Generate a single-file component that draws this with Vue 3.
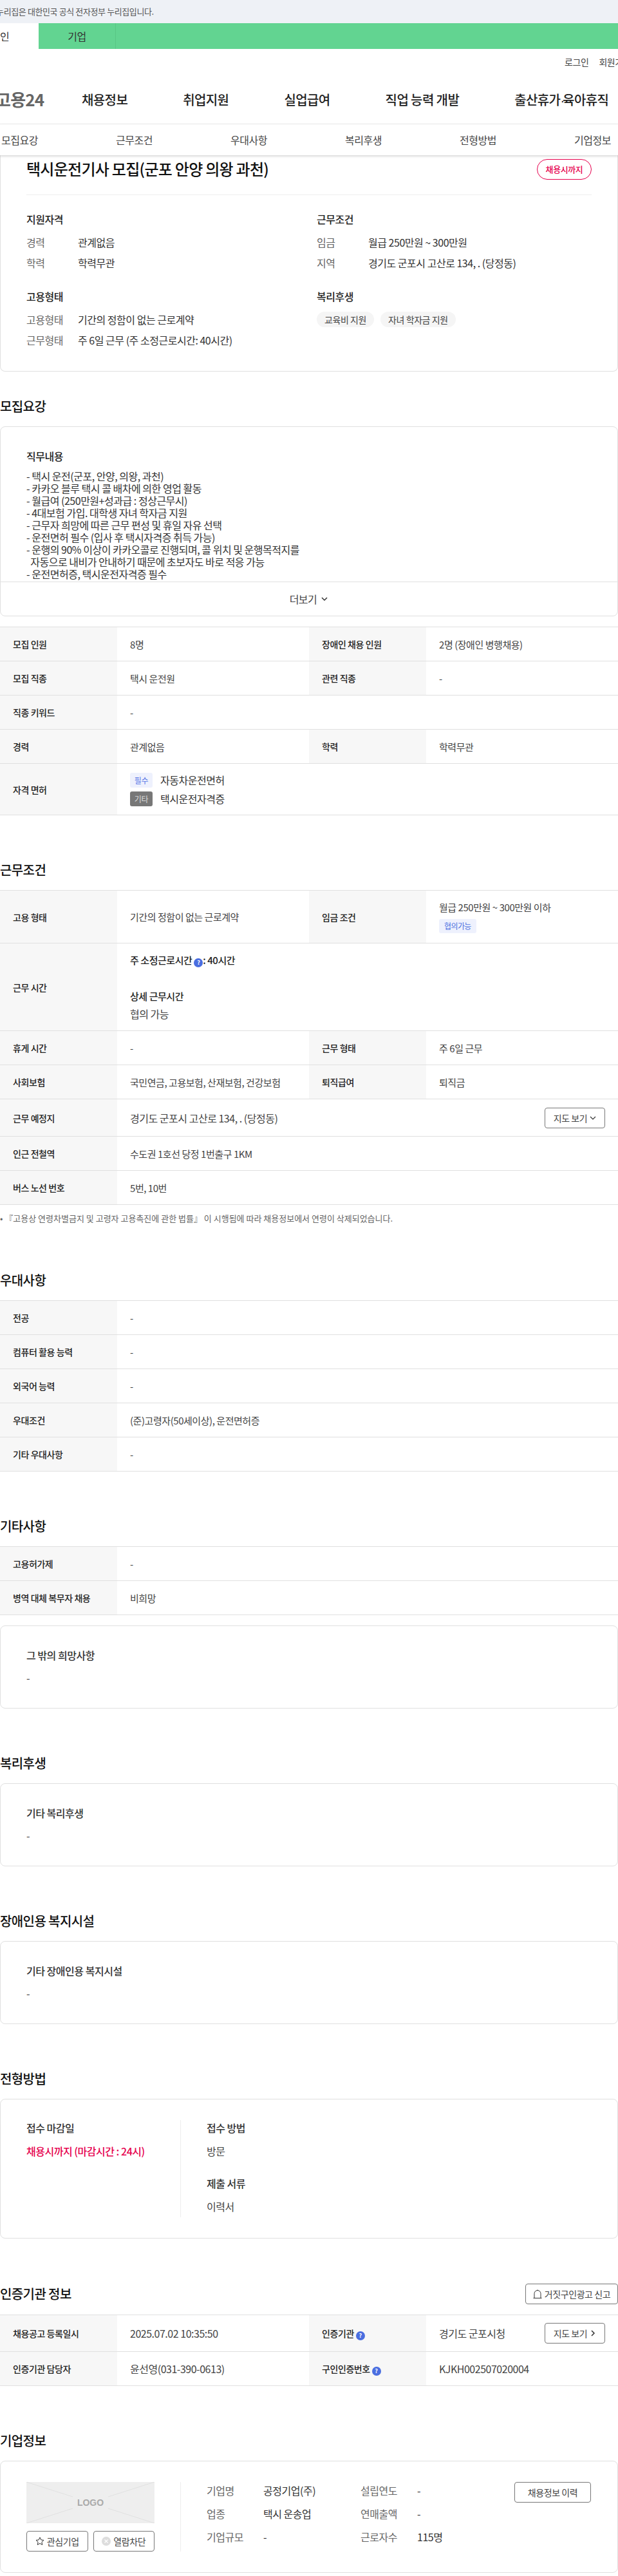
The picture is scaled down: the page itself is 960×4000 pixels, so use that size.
<script setup>
const mainNav = ['채용정보', '취업지원', '실업급여', '직업 능력 개발']
const tabs = ['모집요강', '근무조건', '우대사항', '복리후생', '전형방법', '기업정보']

const jobLines = [
  '- 택시 운전(군포, 안양, 의왕, 과천)',
  '- 카카오 블루 택시 콜 배차에 의한 영업 활동',
  '- 월급여 (250만원+성과급 : 정상근무시)',
  '- 4대보험 가입. 대학생 자녀 학자금 지원',
  '- 근무자 희망에 따른 근무 편성 및 휴일 자유 선택',
  '- 운전면허 필수 (입사 후 택시자격증 취득 가능)',
  '- 운행의 90% 이상이 카카오콜로 진행되며, 콜 위치 및 운행목적지를',
  '  자동으로 내비가 안내하기 때문에 초보자도 바로 적응 가능',
  '- 운전면허증, 택시운전자격증 필수'
]

const prefRows = [
  ['전공', '-'],
  ['컴퓨터 활용 능력', '-'],
  ['외국어 능력', '-'],
  ['우대조건', '(준)고령자(50세이상), 운전면허증'],
  ['기타 우대사항', '-']
]
</script>

<template>
  <div class="page">
    <div class="gov-bar"><span>이 누리집은 대한민국 공식 전자정부 누리집입니다.</span></div>
    <div class="user-tabs">
      <a class="user-tab on">개인</a>
      <a class="user-tab">기업</a>
    </div>
    <div class="util">
      <a>로그인</a>
      <a>회원가입</a>
    </div>
    <div class="gnb">
      <span class="logo">고용24</span>
      <a v-for="item in mainNav" :key="item">{{ item }}</a>
      <a>출산휴가<span class="dot">·</span>육아휴직</a>
    </div>
    <nav class="tabs">
      <a v-for="tab in tabs" :key="tab">{{ tab }}</a>
    </nav>

    <div class="card summary">
      <div class="summary-head">
        <h1>택시운전기사 모집(군포 안양 의왕 과천)</h1>
        <span class="deadline">채용시까지</span>
      </div>
      <div class="summary-grid">
        <div>
          <h3>지원자격</h3>
          <dl>
            <dt>경력</dt><dd>관계없음</dd>
            <dt>학력</dt><dd>학력무관</dd>
          </dl>
        </div>
        <div>
          <h3>근무조건</h3>
          <dl>
            <dt>임금</dt><dd>월급 250만원 ~ 300만원</dd>
            <dt>지역</dt><dd>경기도 군포시 고산로 134, . (당정동)</dd>
          </dl>
        </div>
        <div>
          <h3>고용형태</h3>
          <dl>
            <dt>고용형태</dt><dd>기간의 정함이 없는 근로계약</dd>
            <dt>근무형태</dt><dd>주 6일 근무 (주 소정근로시간: 40시간)</dd>
          </dl>
        </div>
        <div>
          <h3>복리후생</h3>
          <div class="chips">
            <span>교육비 지원</span>
            <span>자녀 학자금 지원</span>
          </div>
        </div>
      </div>
    </div>

    <section class="first">
      <h2>모집요강</h2>
      <div class="card job">
        <div class="job-body">
          <h4>직무내용</h4>
          <pre>{{ jobLines.join('\n') }}</pre>
        </div>
        <div class="more">
          더보기
          <svg width="12" height="12" viewBox="0 0 12 12"><path d="M2 4l4 4 4-4" fill="none" stroke="#333" stroke-width="1.5"/></svg>
        </div>
      </div>
      <table class="info mt16">
        <colgroup><col class="c-th"><col class="c-td"><col class="c-th"><col class="c-td"></colgroup>
        <tbody>
          <tr><th>모집 인원</th><td>8명</td><th>장애인 채용 인원</th><td>2명 (장애인 병행채용)</td></tr>
          <tr><th>모집 직종</th><td>택시 운전원</td><th>관련 직종</th><td>-</td></tr>
          <tr><th>직종 키워드</th><td colspan="3">-</td></tr>
          <tr><th>경력</th><td>관계없음</td><th>학력</th><td>학력무관</td></tr>
          <tr class="license">
            <th>자격 면허</th>
            <td colspan="3">
              <div class="lic"><span class="lic-tag must">필수</span>자동차운전면허</div>
              <div class="lic"><span class="lic-tag etc">기타</span>택시운전자격증</div>
            </td>
          </tr>
        </tbody>
      </table>
    </section>

    <section>
      <h2>근무조건</h2>
      <table class="info">
        <colgroup><col class="c-th"><col class="c-td"><col class="c-th"><col class="c-td"></colgroup>
        <tbody>
          <tr class="h82">
            <th>고용 형태</th>
            <td>기간의 정함이 없는 근로계약</td>
            <th>임금 조건</th>
            <td>
              <div class="lh22">월급 250만원 ~ 300만원 이하</div>
              <span class="nego">협의가능</span>
            </td>
          </tr>
          <tr class="h136">
            <th>근무 시간</th>
            <td colspan="3">
              <div class="strong lh22">주 소정근로시간 <i class="help">?</i>: 40시간</div>
              <div class="strong lh22 hours">상세 근무시간</div>
              <div class="hours-val">협의 가능</div>
            </td>
          </tr>
          <tr><th>휴게 시간</th><td>-</td><th>근무 형태</th><td>주 6일 근무</td></tr>
          <tr><th>사회보험</th><td>국민연금, 고용보험, 산재보험, 건강보험</td><th>퇴직급여</th><td>퇴직금</td></tr>
          <tr class="h58">
            <th>근무 예정지</th>
            <td colspan="3">
              <div class="with-btn">
                <span class="big">경기도 군포시 고산로 134, . (당정동)</span>
                <button class="btn map">지도 보기
                  <svg width="10" height="10" viewBox="0 0 10 10"><path d="M1 3l4 4 4-4" fill="none" stroke="#333" stroke-width="1.2"/></svg>
                </button>
              </div>
            </td>
          </tr>
          <tr><th>인근 전철역</th><td colspan="3">수도권 1호선 당정 1번출구 1KM</td></tr>
          <tr><th>버스 노선 번호</th><td colspan="3">5번, 10번</td></tr>
        </tbody>
      </table>
      <p class="note">• 『고용상 연령차별금지 및 고령자 고용촉진에 관한 법률』 이 시행됨에 따라 채용정보에서 연령이 삭제되었습니다.</p>
    </section>

    <section>
      <h2>우대사항</h2>
      <table class="info">
        <colgroup><col class="c-th"><col class="c-td"><col class="c-th"><col class="c-td"></colgroup>
        <tbody>
          <tr v-for="row in prefRows" :key="row[0]"><th>{{ row[0] }}</th><td colspan="3">{{ row[1] }}</td></tr>
        </tbody>
      </table>
    </section>

    <section>
      <h2>기타사항</h2>
      <table class="info">
        <colgroup><col class="c-th"><col class="c-td"><col class="c-th"><col class="c-td"></colgroup>
        <tbody>
          <tr><th>고용허가제</th><td colspan="3">-</td></tr>
          <tr><th>병역 대체 복무자 채용</th><td colspan="3">비희망</td></tr>
        </tbody>
      </table>
      <div class="card plain mt16">
        <h5>그 밖의 희망사항</h5>
        <p>-</p>
      </div>
    </section>

    <section>
      <h2>복리후생</h2>
      <div class="card plain">
        <h5>기타 복리후생</h5>
        <p>-</p>
      </div>
    </section>

    <section>
      <h2>장애인용 복지시설</h2>
      <div class="card plain">
        <h5>기타 장애인용 복지시설</h5>
        <p>-</p>
      </div>
    </section>

    <section>
      <h2>전형방법</h2>
      <div class="card apply">
        <div class="apply-left">
          <h5>접수 마감일</h5>
          <p class="red">채용시까지 (마감시간 : 24시)</p>
        </div>
        <div class="apply-right">
          <h5>접수 방법</h5>
          <p>방문</p>
          <h5 class="docs">제출 서류</h5>
          <p>이력서</p>
        </div>
      </div>
    </section>

    <section>
      <div class="head-row">
        <h2>인증기관 정보</h2>
        <button class="btn report">
          <svg width="14" height="14" viewBox="0 0 14 14"><path d="M.5 13.500h13M2 13.500V6.500a5 5 0 0 1 10 0v7M7 1.500V.5" fill="none" stroke="#333" stroke-width="1"/></svg>
          거짓구인광고 신고
        </button>
      </div>
      <table class="info">
        <colgroup><col class="c-th"><col class="c-td"><col class="c-th"><col class="c-td"></colgroup>
        <tbody>
          <tr class="h57">
            <th>채용공고 등록일시</th>
            <td class="big">2025.07.02 10:35:50</td>
            <th>인증기관 <i class="help">?</i></th>
            <td>
              <div class="with-btn">
                <span class="big">경기도 군포시청</span>
                <button class="btn map">지도 보기
                  <svg width="10" height="12" viewBox="0 0 10 12"><path d="M3 2l4 4-4 4" fill="none" stroke="#333" stroke-width="1.5"/></svg>
                </button>
              </div>
            </td>
          </tr>
          <tr>
            <th>인증기관 담당자</th>
            <td class="big">윤선영(031-390-0613)</td>
            <th>구인인증번호 <i class="help">?</i></th>
            <td class="big">KJKH002507020004</td>
          </tr>
        </tbody>
      </table>
    </section>

    <section>
      <h2>기업정보</h2>
      <div class="card company">
        <div class="company-left">
          <div class="logo-box">
            <svg width="199" height="64" viewBox="0 0 199 64">
              <path d="M0 0l72 23M127 23L199 0M0 64l72-23M127 41l72 23" stroke="#e0e0e0" fill="none"/>
            </svg>
            <span>LOGO</span>
          </div>
          <div class="company-btns">
            <button class="btn">
              <svg width="14" height="14" viewBox="0 0 14 14"><path d="M7 1l1.800 3.900 4.200.5-3.100 2.900.8 4.200L7 10.400 3.300 12.500l.8-4.200L1 5.400l4.200-.5z" fill="none" stroke="#333" stroke-width="1"/></svg>
              관심기업
            </button>
            <button class="btn">
              <svg width="14" height="14" viewBox="0 0 14 14"><circle cx="7" cy="7" r="7" fill="#ddd"/><path d="M4.500 4.500l5 5M9.500 4.500l-5 5" stroke="#fff" stroke-width="1.2"/></svg>
              열람차단
            </button>
          </div>
        </div>
        <div class="company-info">
          <span class="k">기업명</span><span class="v">공정기업(주)</span><span class="k">설립연도</span><span class="v">-</span>
          <span class="k">업종</span><span class="v">택시 운송업</span><span class="k">연매출액</span><span class="v">-</span>
          <span class="k">기업규모</span><span class="v">-</span><span class="k">근로자수</span><span class="v">115명</span>
        </div>
        <button class="btn history">채용정보 이력</button>
      </div>
    </section>
  </div>
</template>

<style>
body {
  margin: 0;
  background: #fff;
}
</style>

<style scoped>
.page {
  width: 960px;
  height: 4000px;
  overflow: hidden;
  font-family: "Noto Sans CJK KR", "Noto Sans", sans-serif;
  font-size: 15px;
  color: #333;
}
/* letter-spacing in em has to be set per element, it inherits as a fixed length */
.page,
.page * {
  letter-spacing: -0.03em;
}

/* header */
.gov-bar {
  height: 36px;
  line-height: 36px;
  background: #eef1f6;
  font-size: 13px;
  color: #555;
  white-space: nowrap;
}
.gov-bar span {
  margin-left: -20px;
}
.user-tabs {
  display: flex;
  height: 40px;
  padding-left: 60px;
  background: #62d491;
  position: relative;
}
.user-tab {
  width: 119px;
  line-height: 40px;
  text-align: center;
  font-size: 16px;
  color: #333;
  border-right: 1px solid #58c685;
}
.user-tab.on {
  position: absolute;
  left: -60px;
  width: 120px;
  background: #fff;
  border: 0;
}
.util {
  display: flex;
  gap: 16px;
  height: 40px;
  align-items: center;
  font-size: 14px;
  color: #444;
  padding-left: 877px;
  white-space: nowrap;
}
.gnb {
  display: flex;
  gap: 86px;
  align-items: center;
  height: 76px;
  border-bottom: 1px solid #e8e8e8;
  font-size: 20px;
  font-weight: 500;
  color: #222;
  white-space: nowrap;
  padding-left: 127px;
  position: relative;
}
.dot {
  font-family: "Liberation Sans", sans-serif;
  letter-spacing: -0.15em;
}
.logo {
  position: absolute;
  left: -7px;
  top: 19px;
  line-height: 38px;
  font-size: 26px;
  font-weight: 700;
  color: #666;
}
.tabs {
  display: flex;
  justify-content: space-between;
  height: 48px;
  align-items: center;
  padding: 0 11px 0 2px;
  font-size: 16px;
  color: #444;
  box-shadow: 0 2px 3px rgba(0, 0, 0, .15);
  position: relative;
}

/* cards */
.card {
  border: 1px solid #e0e0e0;
  border-radius: 8px;
  box-sizing: border-box;
  background: #fff;
}
.summary {
  height: 336px;
  padding: 0 40px;
  border-top: 0;
  border-radius: 0 0 8px 8px;
}
.summary-head {
  display: flex;
  justify-content: space-between;
  height: 62px;
  border-bottom: 1px solid #eee;
  box-sizing: border-box;
}
h1 {
  margin: 0;
  font-size: 24px;
  font-weight: 500;
  line-height: 42px;
  letter-spacing: -0.05em;
  color: #111;
}
.deadline {
  margin-top: 6px;
  height: 32px;
  line-height: 30px;
  width: 85px;
  text-align: center;
  box-sizing: border-box;
  border: 1px solid #e6004d;
  border-radius: 16px;
  color: #e6004d;
  font-size: 13px;
  font-weight: 500;
}
.summary-grid {
  display: grid;
  grid-template-columns: 451px 1fr;
  row-gap: 28px;
  padding-top: 25px;
}
h3 {
  margin: 0 0 12px;
  font-size: 16px;
  line-height: 24px;
  font-weight: 500;
  color: #222;
}
dl {
  display: grid;
  grid-template-columns: 80px 1fr;
  row-gap: 8px;
  margin: 0;
  font-size: 16px;
  line-height: 24px;
}
dt {
  color: #666;
}
dd {
  margin: 0;
  color: #333;
  white-space: nowrap;
}
.chips {
  display: flex;
  gap: 10px;
}
.chips span {
  height: 24px;
  line-height: 24px;
  padding: 0 12px;
  border-radius: 12px;
  background: #f5f5f5;
  font-size: 14px;
  color: #444;
}

/* sections */
section {
  margin-top: 70px;
}
section.first {
  margin-top: 39px;
}
h2 {
  margin: 0 0 16px;
  height: 30px;
  line-height: 30px;
  font-size: 20px;
  font-weight: 500;
  color: #111;
}
.mt16 {
  margin-top: 16px;
}
.job {
  height: 295px;
  overflow: hidden;
}
.job-body {
  height: 241px;
  box-sizing: border-box;
  padding: 33px 40px 0;
  overflow: hidden;
  border-bottom: 1px solid #e0e0e0;
}
h4 {
  margin: 0 0 10px;
  font-size: 16px;
  line-height: 24px;
  font-weight: 500;
  color: #222;
}
pre {
  margin: 0;
  font-family: inherit;
  font-size: 16px;
  line-height: 19px;
  color: #333;
}
.more {
  display: flex;
  justify-content: center;
  align-items: center;
  gap: 6px;
  height: 52px;
  font-size: 16px;
  color: #444;
}

/* tables */
.info {
  width: 960px;
  table-layout: fixed;
  border-collapse: collapse;
  border-top: 1px solid #e0e0e0;
}
.c-th {
  width: 182px;
}
.c-td {
  width: 298px;
}
.info tr {
  height: 53px;
  border-bottom: 1px solid #e0e0e0;
}
.info th,
.info td {
  box-sizing: border-box;
  padding: 0 20px;
  text-align: left;
}
.info th {
  background: #f7f7f7;
  font-size: 14px;
  font-weight: 500;
  color: #222;
}
.info td {
  font-size: 15px;
  color: #444;
}
.info td.big,
.big {
  font-size: 16px;
}
.h82 {
  height: 82px !important;
}
.h136 {
  height: 136px !important;
}
.h58 {
  height: 58px !important;
}
.h57 {
  height: 57px !important;
}
.license {
  height: 80px !important;
}
.lic {
  display: flex;
  align-items: center;
  gap: 12px;
  height: 23px;
  font-size: 16px;
  color: #333;
}
.lic + .lic {
  margin-top: 6px;
}
.lic-tag {
  width: 35px;
  height: 23px;
  line-height: 23px;
  text-align: center;
  border-radius: 3px;
  font-size: 12px;
}
.lic-tag.must {
  background: #eef1fd;
  color: #5a78e6;
}
.lic-tag.etc {
  background: #777;
  color: #ddd;
}
.lh22 {
  line-height: 22px;
}
.nego {
  display: block;
  width: fit-content;
  margin-top: 7px;
  height: 22px;
  line-height: 22px;
  padding: 0 8px;
  background: #eef1fd;
  border-radius: 3px;
  font-size: 12px;
  letter-spacing: -0.05em;
  color: #4a6ee0;
}
.strong {
  font-weight: 500;
  color: #222;
}
.hours {
  margin-top: 34px;
}
.hours-val {
  margin-top: 4px;
  font-size: 16px;
  line-height: 24px;
}
.help {
  display: inline-block;
  width: 14px;
  height: 14px;
  line-height: 14px;
  border-radius: 50%;
  background: #4a6ee0;
  color: #fff;
  font-size: 9px;
  font-style: normal;
  font-weight: 700;
  text-align: center;
  vertical-align: -1px;
}
.with-btn {
  display: flex;
  justify-content: space-between;
  align-items: center;
}
.note {
  margin: 10px 0 0;
  height: 22px;
  line-height: 22px;
  font-size: 13px;
  letter-spacing: 0;
  color: #666;
}
.btn {
  display: inline-flex;
  align-items: center;
  justify-content: center;
  gap: 4px;
  box-sizing: border-box;
  height: 32px;
  padding: 0;
  background: #fff;
  border: 1px solid #777;
  border-radius: 4px;
  font-family: inherit;
  font-size: 14px;
  color: #444;
  white-space: nowrap;
}
.map {
  width: 94px;
}

/* plain text cards */
.plain {
  height: 129px;
  padding: 33px 40px 0;
}
h5 {
  margin: 0 0 11px;
  font-size: 16px;
  line-height: 24px;
  font-weight: 500;
  color: #333;
}
.plain p,
.apply p {
  margin: 0;
  font-size: 16px;
  line-height: 24px;
  color: #444;
}
.apply {
  display: flex;
  height: 217px;
  padding: 32px 40px;
}
.apply h5 {
  margin-bottom: 12px;
}
.apply-left {
  width: 239px;
  flex: none;
  border-right: 1px solid #eee;
}
.apply-right {
  padding-left: 40px;
}
.apply .red {
  color: #e6004d;
  font-weight: 500;
}
.apply .docs {
  margin-top: 26px;
}
.head-row {
  display: flex;
  justify-content: space-between;
  align-items: center;
  margin-bottom: 16px;
}
.head-row h2 {
  margin: 0;
}
.report {
  width: 144px;
}

/* company */
.company {
  display: flex;
  height: 174px;
  padding: 32px 40px 0;
}
.company-left {
  width: 240px;
  height: 108px;
  box-sizing: border-box;
  border-right: 1px solid #eee;
  flex: none;
}
.logo-box {
  position: relative;
  width: 199px;
  height: 64px;
  background: #eee;
}
.logo-box svg {
  display: block;
}
.logo-box span {
  position: absolute;
  left: 0;
  right: 0;
  top: 20px;
  line-height: 24px;
  text-align: center;
  font-family: "Liberation Sans", sans-serif;
  font-size: 14px;
  font-weight: 700;
  letter-spacing: 0;
  color: #aaa;
}
.company-btns {
  display: flex;
  gap: 8px;
  width: 199px;
  margin-top: 12px;
}
.company-btns .btn {
  flex: 1;
}
.company-info {
  display: grid;
  grid-template-columns: 88px 151px 88px 128px;
  grid-auto-rows: 26px;
  row-gap: 10px;
  padding-left: 40px;
  align-items: center;
  font-size: 16px;
  height: 108px;
}
.k {
  color: #666;
}
.v {
  color: #333;
}
.history {
  width: 119px;
  flex: none;
  margin-left: 23px;
}
</style>
